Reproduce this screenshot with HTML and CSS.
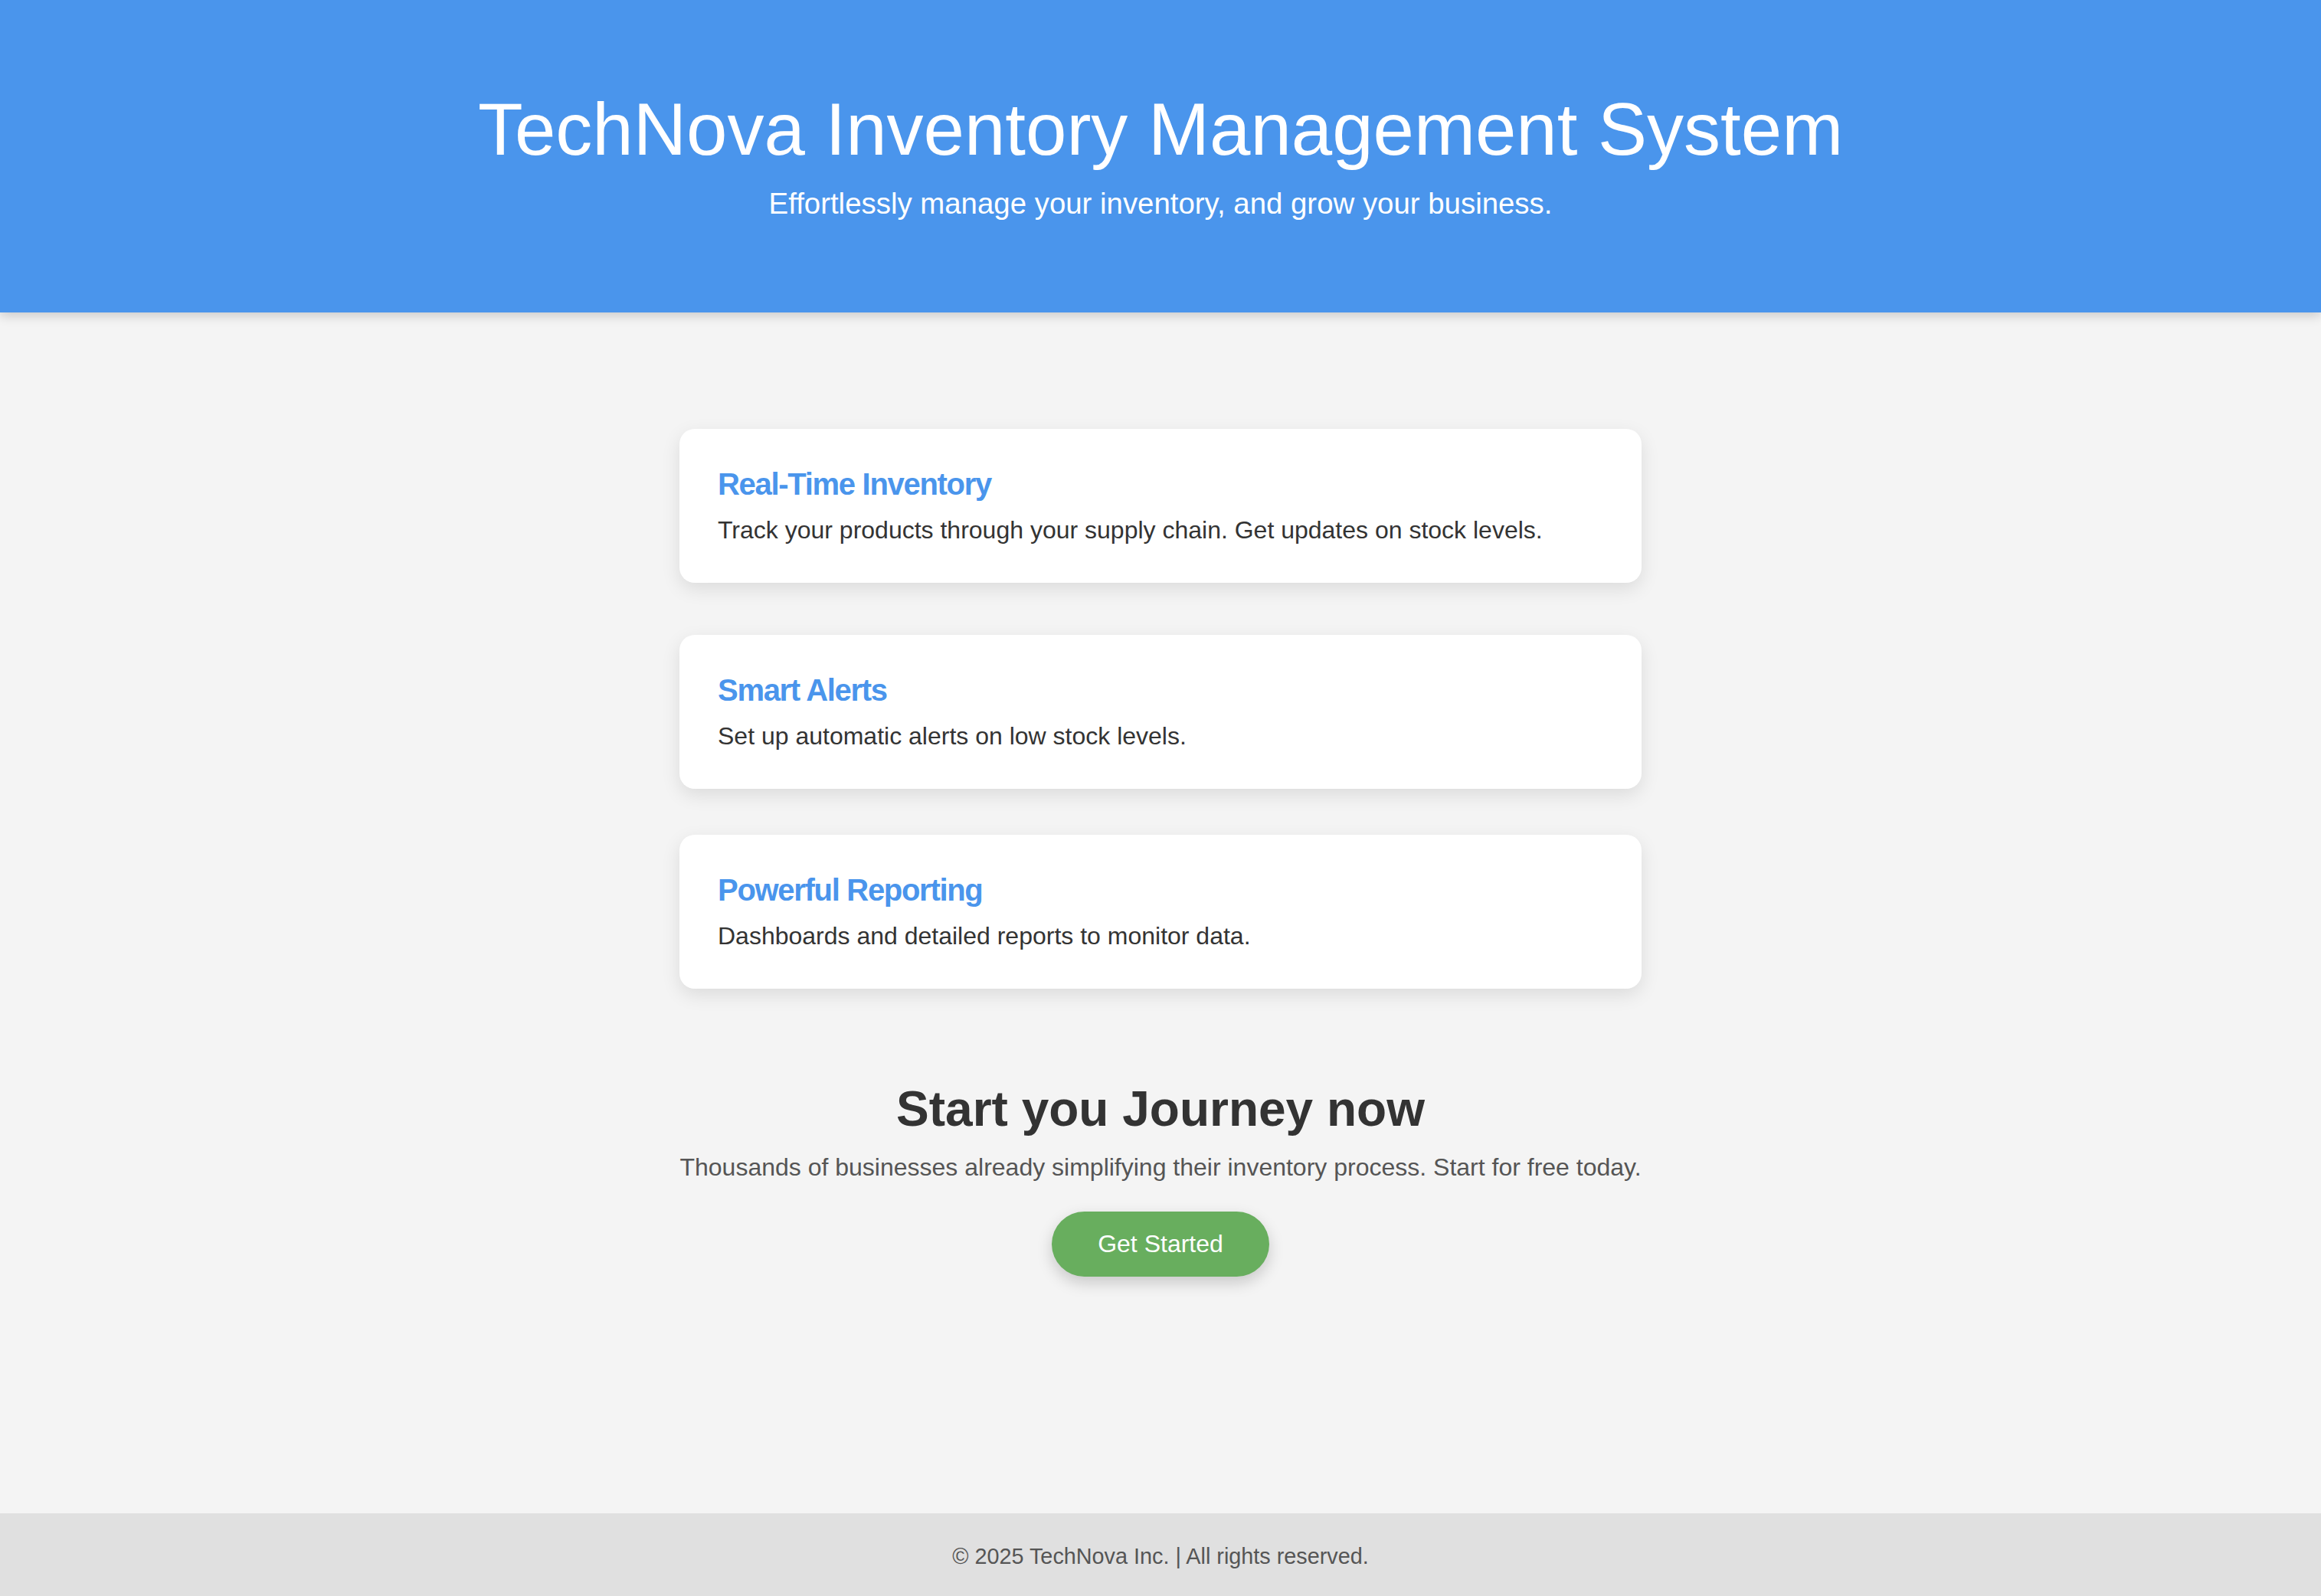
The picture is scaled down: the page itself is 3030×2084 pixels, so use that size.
FILE: index.html
```html
<!DOCTYPE html>
<html lang="en">
<head>
<meta charset="utf-8">
<title>TechNova Inventory Management System</title>
<link rel="stylesheet" href="styles.css">
</head>
<body>
<header class="hero">
  <h1 class="hero-title">TechNova Inventory Management System</h1>
  <p class="hero-sub">Effortlessly manage your inventory, and grow your business.</p>
</header>
<main class="main">
  <section class="features">
    <div class="card card-1">
      <h3 class="card-title">Real-Time Inventory</h3>
      <p class="card-text">Track your products through your supply chain. Get updates on stock levels.</p>
    </div>
    <div class="card card-2">
      <h3 class="card-title">Smart Alerts</h3>
      <p class="card-text">Set up automatic alerts on low stock levels.</p>
    </div>
    <div class="card card-3">
      <h3 class="card-title">Powerful Reporting</h3>
      <p class="card-text">Dashboards and detailed reports to monitor data.</p>
    </div>
  </section>
  <section class="cta">
    <h2 class="cta-title">Start you Journey now</h2>
    <p class="cta-text">Thousands of businesses already simplifying their inventory process. Start for free today.</p>
    <a class="cta-button" href="#">Get Started</a>
  </section>
</main>
<footer class="footer">
  <p class="footer-text">© 2025 TechNova Inc. | All rights reserved.</p>
</footer>
</body>
</html>
```
FILE: styles.css
```css
* { box-sizing: border-box; }
html, body { margin: 0; padding: 0; }
body {
  font-family: "Liberation Sans", Arial, Helvetica, sans-serif;
  background: #f4f4f4;
  color: #333;
  min-height: 100vh;
  display: flex;
  flex-direction: column;
}
.hero {
  background: #4a95ec;
  color: #fff;
  text-align: center;
  height: 408px;
  padding-top: 111px;
  display: flex;
  flex-direction: column;
  align-items: center;
  box-shadow: 0 4px 14px rgba(0, 0, 0, 0.18);
  position: relative;
  z-index: 1;
}
.hero-title {
  margin: 0;
  font-weight: normal;
  font-size: 96px;
  line-height: 115px;
}
.hero-sub {
  margin: 17px 0 0;
  font-size: 38.4px;
  line-height: 46px;
}
.main {
  flex: 1;
  display: flex;
  flex-direction: column;
  align-items: center;
  padding-top: 152px;
}
.features {
  display: flex;
  flex-direction: column;
  width: 1256px;
}
.card {
  background: #fff;
  border-radius: 20px;
  padding: 48px 50px 50px;
  box-shadow: 0 8px 24px rgba(0, 0, 0, 0.10);
  display: flex;
  flex-direction: column;
  gap: 17px;
}
.card-2 { margin-top: 68px; }
.card-3 { margin-top: 60px; }
.card-title {
  margin: 0;
  color: #4a95ec;
  font-size: 40px;
  line-height: 48px;
  font-weight: bold;
  letter-spacing: -1.3px;
}
.card-text {
  margin: 0;
  font-size: 32px;
  line-height: 38px;
  color: #333;
}
.cta {
  margin-top: 119px;
  display: flex;
  flex-direction: column;
  align-items: center;
  text-align: center;
}
.cta-title {
  margin: 0;
  font-size: 64px;
  line-height: 77px;
  font-weight: bold;
  color: #333;
}
.cta-text {
  margin: 18px 0 0;
  font-size: 32px;
  line-height: 38px;
  color: #555;
}
.cta-button {
  margin-top: 39px;
  height: 85px;
  padding: 0 60px;
  border-radius: 43px;
  background: #68ae5e;
  color: #fff;
  font-size: 32px;
  text-decoration: none;
  display: flex;
  align-items: center;
  justify-content: center;
  box-shadow: 0 8px 20px rgba(0, 0, 0, 0.18);
}
.footer {
  background: #e0e0e0;
  height: 108px;
  padding-top: 39px;
  text-align: center;
}
.footer-text {
  margin: 0;
  font-size: 28.8px;
  line-height: 34px;
  color: #555;
}
```
